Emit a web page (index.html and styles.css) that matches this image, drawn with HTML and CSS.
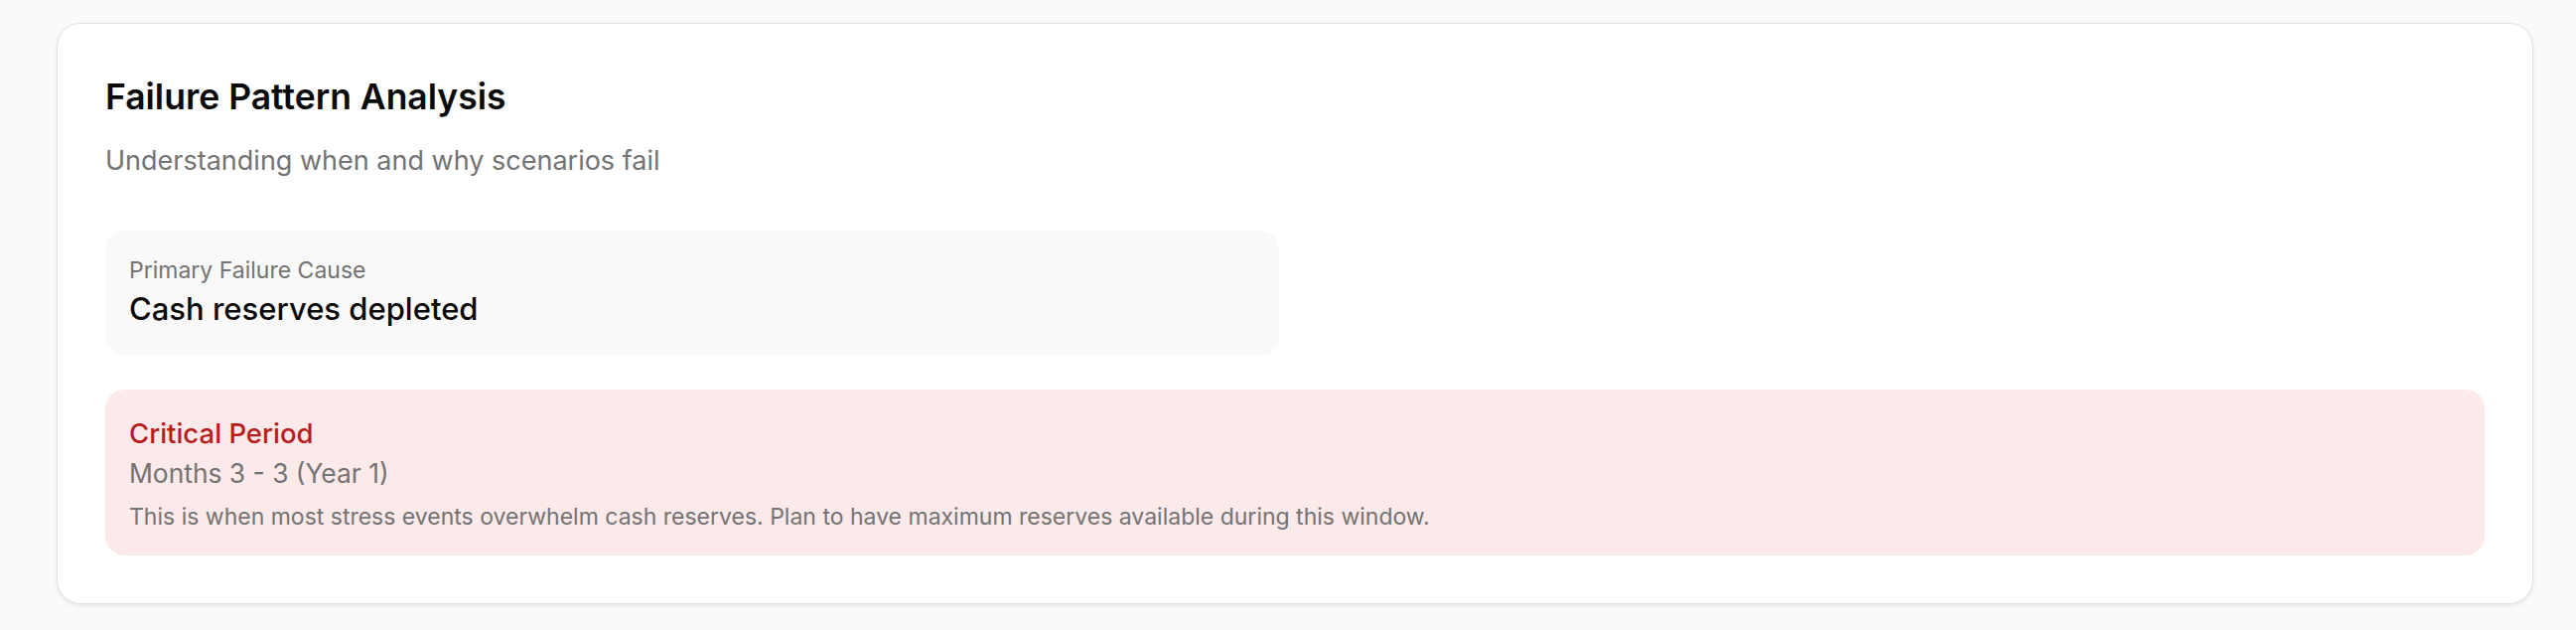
FILE: index.html
```html
<!DOCTYPE html>
<html lang="en">
<head>
<meta charset="utf-8">
<title>Failure Pattern Analysis</title>
<link rel="stylesheet" href="styles.css">
</head>
<body>
<section class="card">
  <header class="card-header">
    <h2 class="card-title">Failure Pattern Analysis</h2>
    <p class="card-subtitle">Understanding when and why scenarios fail</p>
  </header>
  <div class="stats">
    <div class="stat">
      <div class="stat-label">Primary Failure Cause</div>
      <div class="stat-value">Cash reserves depleted</div>
    </div>
  </div>
  <div class="critical">
    <div class="critical-title">Critical Period</div>
    <div class="critical-range">Months 3 - 3 (Year 1)</div>
    <p class="critical-note">This is when most stress events overwhelm cash reserves. Plan to have maximum reserves available during this window.</p>
  </div>
</section>
</body>
</html>
```

FILE: styles.css
```css
* { box-sizing: border-box; }
html, body { margin: 0; }
body {
  background: #fafafa;
  font-family: Inter, "Noto Sans", sans-serif;
  color: #0a0a0a;
  padding: 23px 43px 26px 57px;
}
.card {
  background: #ffffff;
  border: 1px solid #e2e2e2;
  border-radius: 24px;
  box-shadow: 0 2px 4px rgba(0, 0, 0, 0.08);
  padding: 48px;
}
.card-header { margin-bottom: 50px; }
.card-title {
  margin: 0;
  font-size: 35.5px;
  font-weight: 600;
  line-height: 52px;
}
.card-subtitle {
  margin: 18px 0 0;
  font-size: 27px;
  line-height: 40px;
  color: #737373;
}
.stats {
  display: grid;
  grid-template-columns: 1fr 1fr;
  gap: 32px;
  margin-bottom: 34px;
}
.stat {
  background: #f9f9f9;
  border-radius: 20px;
  padding: 24px;
}
.stat-label {
  font-size: 23px;
  line-height: 32px;
  color: #737373;
}
.stat-value {
  font-size: 31px;
  font-weight: 500;
  line-height: 46px;
}
.critical {
  background: #fce9e9;
  border-radius: 20px;
  padding: 24px;
}
.critical-title {
  font-size: 27.5px;
  line-height: 40px;
  font-weight: 500;
  color: #b91c1c;
}
.critical-range {
  font-size: 26.4px;
  line-height: 40px;
  color: #737373;
}
.critical-note {
  margin: 9px 0 0;
  font-size: 23px;
  line-height: 30px;
  color: #737373;
}
```
